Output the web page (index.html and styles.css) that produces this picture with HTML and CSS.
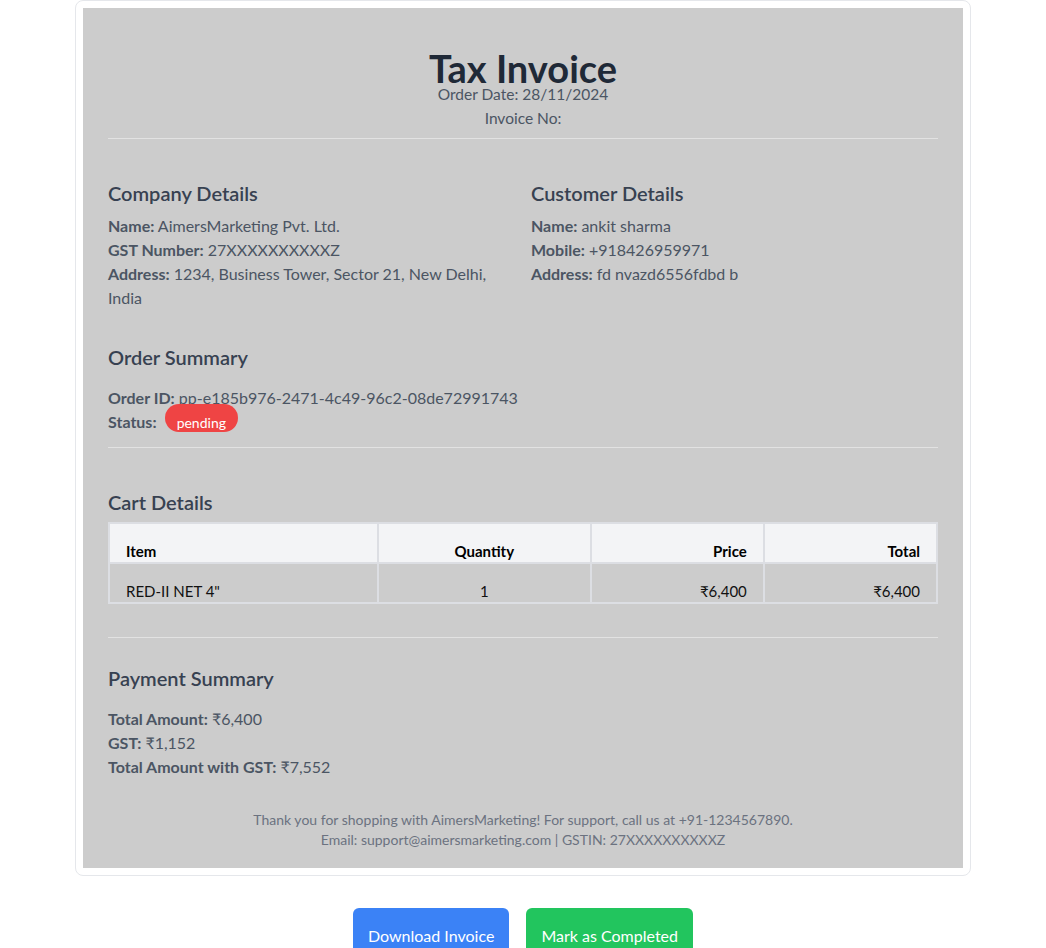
FILE: index.html
```html
<!DOCTYPE html>
<html lang="en">
<head>
    <meta charset="UTF-8">
    <title>Tax Invoice</title>
    <link rel="stylesheet" href="styles.css">
</head>
<body>
    <div class="invoice">
        <div class="sheet">
            <div class="inv_head">
                <h1>Tax Invoice</h1>
                <p>Order Date: 28/11/2024</p>
                <p>Invoice No:</p>
            </div>
            <hr class="rule rule_top">

            <div class="details">
                <div>
                    <h2>Company Details</h2>
                    <p><b>Name:</b> AimersMarketing Pvt. Ltd.</p>
                    <p><b>GST Number:</b> 27XXXXXXXXXXZ</p>
                    <p><b>Address:</b> 1234, Business Tower, Sector 21, New Delhi, India</p>
                </div>
                <div>
                    <h2>Customer Details</h2>
                    <p><b>Name:</b> ankit sharma</p>
                    <p><b>Mobile:</b> +918426959971</p>
                    <p><b>Address:</b> fd nvazd6556fdbd b</p>
                </div>
            </div>

            <div class="order">
                <h2>Order Summary</h2>
                <div class="lines">
                    <p><b>Order ID:</b> pp-e185b976-2471-4c49-96c2-08de72991743</p>
                    <p><b>Status:</b> <span class="badge">pending</span></p>
                </div>
            </div>
            <hr class="rule rule_order">

            <div class="cart">
                <h2>Cart Details</h2>
                <table>
                    <thead>
                        <tr>
                            <th class="c_item">Item</th>
                            <th class="c_qty">Quantity</th>
                            <th class="c_price">Price</th>
                            <th class="c_total">Total</th>
                        </tr>
                    </thead>
                    <tbody>
                        <tr>
                            <td class="c_item">RED-II NET 4"</td>
                            <td class="c_qty">1</td>
                            <td class="c_price">₹6,400</td>
                            <td class="c_total">₹6,400</td>
                        </tr>
                    </tbody>
                </table>
            </div>
            <hr class="rule rule_cart">

            <div class="payment">
                <h2>Payment Summary</h2>
                <div class="lines">
                    <p><b>Total Amount:</b> ₹6,400</p>
                    <p><b>GST:</b> ₹1,152</p>
                    <p><b>Total Amount with GST:</b> ₹7,552</p>
                </div>
            </div>

            <div class="foot">
                <p>Thank you for shopping with AimersMarketing! For support, call us at +91-1234567890.</p>
                <p>Email: support@aimersmarketing.com | GSTIN: 27XXXXXXXXXXZ</p>
            </div>
        </div>
    </div>

    <div class="actions">
        <button class="btn btn_blue">Download Invoice</button>
        <button class="btn btn_green">Mark as Completed</button>
    </div>
</body>
</html>
```

FILE: styles.css
```css
body{
    margin: 0;
    background-color: #fff;
    font-family: "Lato", "Open Sans", sans-serif;
    color: #4b5563;
}
p, h1, h2{
    margin: 0;
}
.invoice{
    width: 880px;
    margin: 0 auto;
    padding: 7px;
    border: 1px solid #e5e7eb;
    border-radius: 8px;
}
.sheet{
    background-color: #cccccc;
    padding: 46px 25px 18px;
}
.inv_head{
    text-align: center;
}
.inv_head h1{
    font-size: 38px;
    line-height: 28px;
    font-weight: 700;
    color: #1f2937;
}
.inv_head p{
    font-size: 15.5px;
    line-height: 24px;
}
.rule{
    border: 0;
    border-top: 1px solid #e2e2e2;
    margin: 0;
}
.rule_top{
    margin-top: 8px;
}
h2{
    font-size: 20px;
    line-height: 28px;
    font-weight: 600;
    color: #374151;
}
.details{
    display: grid;
    grid-template-columns: 1fr 1fr;
    gap: 16px;
    margin-top: 40px;
}
.details h2{
    margin-bottom: 7px;
}
.details p, .lines p{
    font-size: 16px;
    line-height: 24px;
}
b{
    font-weight: 700;
}
.order{
    margin-top: 33px;
}
.lines{
    margin-top: 15px;
}
.badge{
    display: inline-block;
    margin-top: -8px;
    margin-left: 4px;
    padding: 11px 12px 1px;
    font-size: 14px;
    line-height: 16px;
    color: #fff;
    background-color: #ef4444;
    border-radius: 9999px;
}
.rule_order{
    margin-top: 13px;
}
.cart{
    margin-top: 40px;
}
.cart h2{
    margin-bottom: 6px;
}
table{
    width: 830px;
    border-collapse: collapse;
    font-size: 15px;
}
th, td{
    border: 2px solid #dcdee3;
    padding: 17px 16px 1px;
    line-height: 20px;
}
th{
    background-color: #f3f4f6;
    color: #000;
    font-weight: 700;
}
td{
    color: #111;
}
.c_item{
    width: 239px;
    text-align: left;
}
.c_qty{
    width: 181px;
    text-align: center;
}
.c_price, .c_total{
    width: 141px;
    text-align: right;
}
.rule_cart{
    margin-top: 33px;
}
.payment{
    margin-top: 26px;
}
.foot{
    margin-top: 31px;
    text-align: center;
    font-size: 14px;
    line-height: 20px;
    color: #6b7280;
}
.actions{
    display: flex;
    justify-content: center;
    gap: 17px;
    margin-top: 32px;
}
.btn{
    border: 0;
    border-radius: 6px;
    padding: 16px 15px 8px;
    font-family: inherit;
    font-size: 16px;
    line-height: 24px;
    color: #fff;
}
.btn_blue{
    background-color: #3b82f6;
}
.btn_green{
    background-color: #22c55e;
}
```
